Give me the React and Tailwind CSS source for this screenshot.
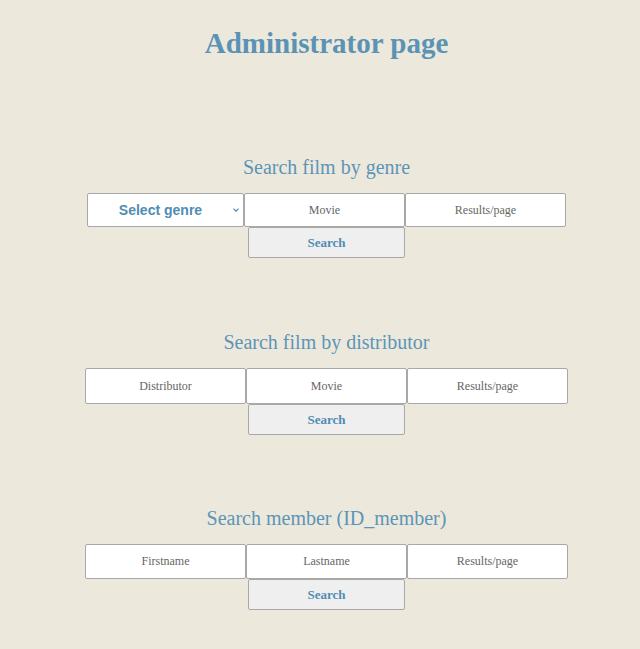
import React from "react";

const serif = { fontFamily: '"Liberation Serif", "Times New Roman", serif' };

function TextBox({ placeholder, w = "w-[161px]" }) {
  return (
    <input
      type="text"
      placeholder={placeholder}
      className={`${w} h-full bg-white border border-[#a8a8a8] rounded-[2px] text-center text-[12px] text-[#555] placeholder:text-[#666] outline-none`}
      style={serif}
    />
  );
}

function SearchButton() {
  return (
    <button
      type="button"
      className="w-[157px] h-[31px] bg-[#efefef] border border-[#a8a8a8] rounded-[2px] text-[13px] font-bold text-[#4f8db3]"
      style={serif}
    >
      Search
    </button>
  );
}

function Heading({ children }) {
  return (
    <h2 className="text-[20px] leading-[28px] text-[#5b95b8] text-center" style={serif}>
      {children}
    </h2>
  );
}

export default function App() {
  return (
    <div className="min-h-screen bg-[#ede8dc] pl-[13px] pt-[25px] pb-[40px]">
      <h1
        className="text-[29px] leading-[36px] font-bold text-[#5a93b5] text-center"
        style={serif}
      >
        Administrator page
      </h1>

      <section className="mt-[92px] flex flex-col items-center">
        <Heading>Search film by genre</Heading>
        <div className="mt-[12px] flex h-[34px]">
          <div className="relative w-[157px] h-full">
            <select
              className="appearance-none w-full h-full bg-white border border-[#a8a8a8] rounded-[2px] pr-[10px] text-[14px] font-bold text-[#4f8db3] [text-align-last:center] outline-none"
              style={{ fontFamily: '"Liberation Sans", Arial, sans-serif' }}
              defaultValue=""
            >
              <option value="">Select genre</option>
            </select>
            <svg
              className="absolute right-[5px] top-[15px] pointer-events-none"
              width="6"
              height="4"
              viewBox="0 0 6 4"
              fill="none"
            >
              <path d="M0.5 0.7 L3 3.2 L5.5 0.7" stroke="#4f8db3" strokeWidth="1.2" />
            </svg>
          </div>
          <TextBox placeholder="Movie" />
          <TextBox placeholder="Results/page" />
        </div>
        <SearchButton />
      </section>

      <section className="mt-[70px] flex flex-col items-center">
        <Heading>Search film by distributor</Heading>
        <div className="mt-[12px] flex h-[36px]">
          <TextBox placeholder="Distributor" />
          <TextBox placeholder="Movie" />
          <TextBox placeholder="Results/page" />
        </div>
        <SearchButton />
      </section>

      <section className="mt-[69px] flex flex-col items-center">
        <Heading>Search member (ID_member)</Heading>
        <div className="mt-[12px] flex h-[35px]">
          <TextBox placeholder="Firstname" />
          <TextBox placeholder="Lastname" />
          <TextBox placeholder="Results/page" />
        </div>
        <SearchButton />
      </section>
    </div>
  );
}
